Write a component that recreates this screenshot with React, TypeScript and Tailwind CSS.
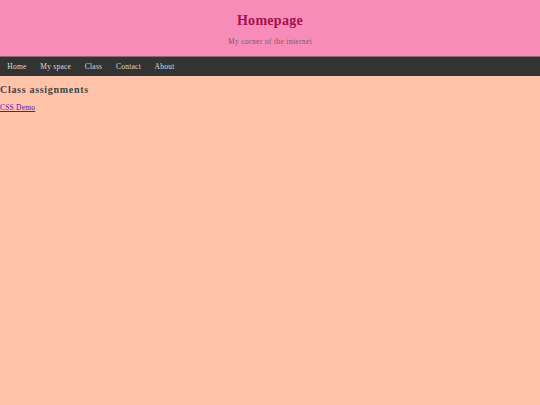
export default function App() {
  const items = ["Home", "My space", "Class", "Contact", "About"];
  return (
    <div className="min-h-[405px] bg-[#ffc3a9]" style={{ fontFamily: '"Liberation Serif", serif' }}>
      <header className="h-[56px] bg-[#f88cb8] flex flex-col items-center">
        <h1 className="mt-[12px] text-[14px] leading-[18px] font-bold tracking-[0.3px] text-[#a3124d]">Homepage</h1>
        <p className="mt-[7px] text-[7.5px] leading-[9px] tracking-[0.35px] text-[#735a6a]">My corner of the internet</p>
      </header>
      <nav className="h-[20px] bg-[#333333] border-t border-[#8a6a78] flex items-center pl-[0.5px]">
        {items.map((t) => (
          <span key={t} className="px-[6.8px] text-[7.5px] leading-[9px] tracking-[0.25px] text-[#dcdcdc]">{t}</span>
        ))}
      </nav>
      <main>
        <h2 className="mt-[8px] text-[10px] leading-[12px] font-bold tracking-[0.7px] text-[#444444]">Class assignments</h2>
        <a href="#" className="block mt-[7px] text-[7.5px] leading-[9px] underline tracking-[0.2px] text-[#5511cc] w-fit">CSS Demo</a>
      </main>
    </div>
  );
}
